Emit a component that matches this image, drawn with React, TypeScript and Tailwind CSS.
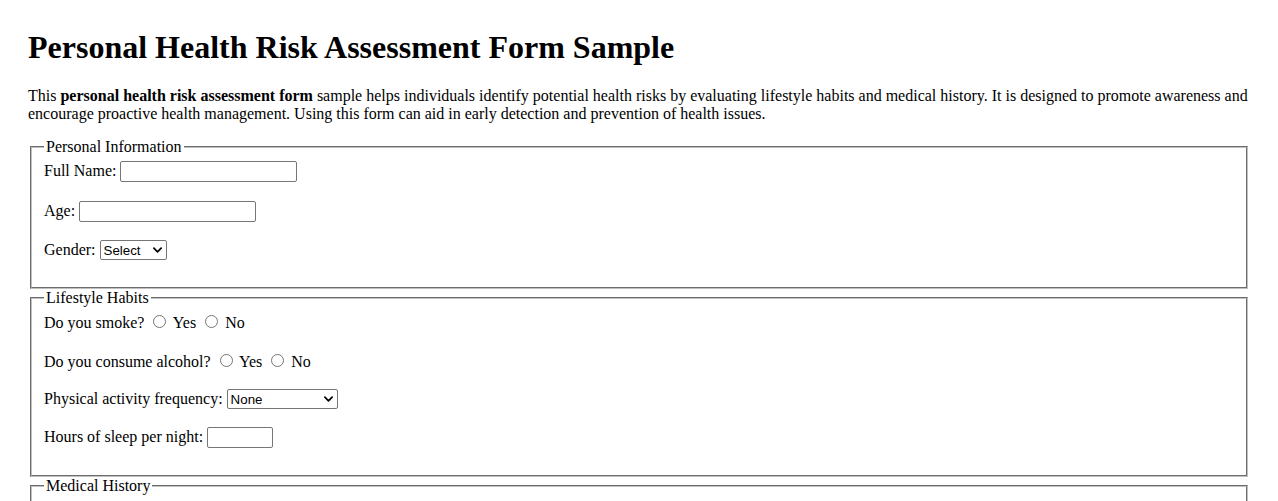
import React from 'react';

/**
 * Personal health risk assessment form — plain document styling,
 * serif body text with native-looking form controls.
 */

const field =
  "h-[21px] border border-[#767676] rounded-[2px] px-0.5 text-[13.33px] font-['Liberation_Sans',Arial,sans-serif] bg-white align-baseline";
const radio = 'mt-[3px] mr-[3px] ml-[5px] w-[13px] h-[13px] align-baseline';
const fieldset = 'mx-0.5 border-2 border-[#c0c0c0] [border-style:groove] pt-[5.6px] px-3 pb-2';
const row = 'mb-[18.4px]';

function Dropdown({ width, options, value }: { width: string; options: string[]; value: string }) {
  return (
    <span className="relative inline-block align-baseline">
      <select
        defaultValue={value}
        className={`${width} h-[20px] appearance-none border border-[#767676] rounded-[2px] bg-white pl-[3px] pr-4 text-[13.33px] text-black font-['Liberation_Sans',Arial,sans-serif] align-baseline`}
      >
        {options.map(o => (
          <option key={o} value={o}>{o}</option>
        ))}
      </select>
      {/* chevron drawn over the native control */}
      <svg
        viewBox="0 0 10 6"
        className="pointer-events-none absolute right-[5px] top-[7px] w-[9px] h-[6px]"
        fill="none"
        stroke="#000"
        strokeWidth="1.9"
        strokeLinecap="round"
        strokeLinejoin="round"
      >
        <path d="M1 1 L5 5 L9 1" />
      </svg>
    </span>
  );
}

function YesNo({ name }: { name: string }) {
  return (
    <>
      {' '}
      <input type="radio" name={name} value="yes" className={radio} /> Yes{' '}
      <input type="radio" name={name} value="no" className={radio} /> No
    </>
  );
}

export default function App() {
  return (
    <div className="bg-white min-h-screen pt-2 px-7 text-black text-[16px] leading-[normal] font-['Liberation_Serif','Times_New_Roman',serif]">
      <h1 className="text-[32px] font-bold leading-[normal] mt-[21.44px] mb-[20.44px]">Personal Health Risk Assessment Form Sample</h1>
      <p className="mt-[14px] mb-[15px]">
        This <strong className="font-bold">personal health risk assessment form</strong> sample helps individuals identify
        potential health risks by evaluating lifestyle habits and medical history. It is designed to promote awareness and
        encourage proactive health management. Using this form can aid in early detection and prevention of health issues.
      </p>

      <form>
        <fieldset className={fieldset}>
          <legend className="px-0.5">Personal Information</legend>
          <div className={row}>
            Full Name: <input type="text" className={`${field} w-[177px]`} />
          </div>
          <div className={row}>
            Age: <input type="text" className={`${field} w-[177px]`} />
          </div>
          <div className={row}>
            Gender: <Dropdown width="w-[67px]" value="Select" options={['Select', 'Male', 'Female', 'Other']} />
          </div>
        </fieldset>

        <fieldset className={fieldset}>
          <legend className="px-0.5">Lifestyle Habits</legend>
          <div className={row}>
            Do you smoke?
            <YesNo name="smoke" />
          </div>
          <div className={row}>
            Do you consume alcohol?
            <YesNo name="alcohol" />
          </div>
          <div className={row}>
            Physical activity frequency:{' '}
            <Dropdown
              width="w-[111px]"
              value="None"
              options={['None', '1-2 times/week', '3-5 times/week', 'Daily']}
            />
          </div>
          <div className={row}>
            Hours of sleep per night: <input type="text" className={`${field} w-[66px]`} />
          </div>
        </fieldset>

        <fieldset className={fieldset}>
          <legend className="px-0.5">Medical History</legend>
          <div className={row}>
            Do you have any chronic conditions?
            <YesNo name="chronic" />
          </div>
          <div className={row}>
            Family history of heart disease?
            <YesNo name="family" />
          </div>
          <div className={row}>
            Current medications: <input type="text" className={`${field} w-[177px]`} />
          </div>
        </fieldset>
      </form>
    </div>
  );
}
